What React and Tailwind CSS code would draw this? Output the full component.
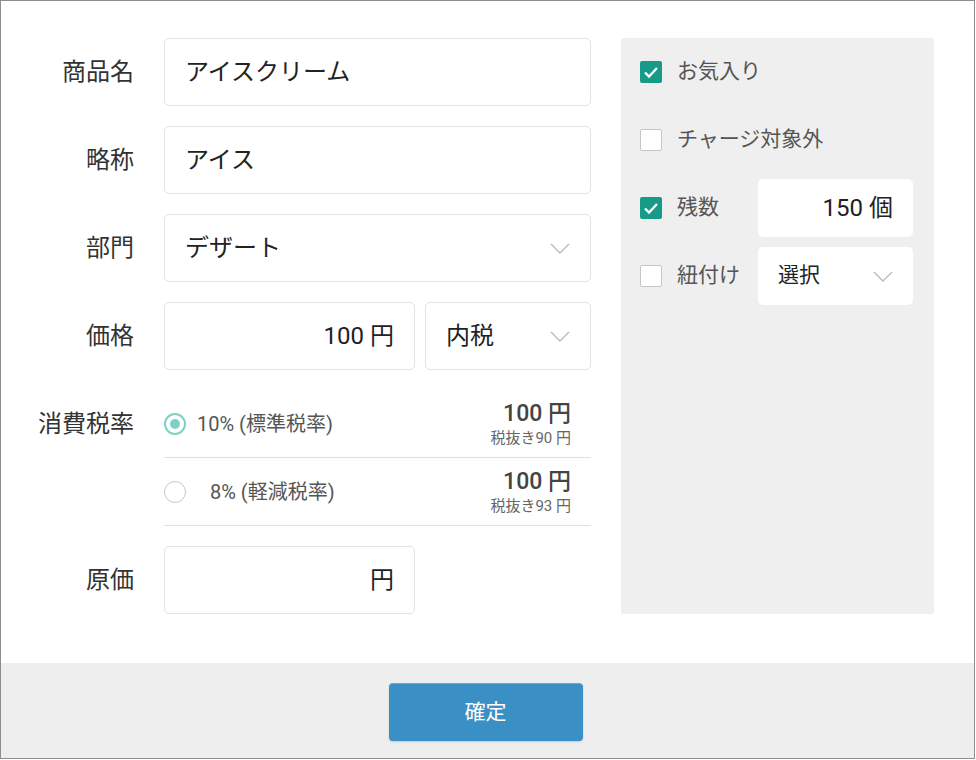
import React from 'react';

const font = { fontFamily: '"Roboto", "Noto Sans CJK JP", sans-serif' };

const Chevron = ({ className = '' }) => (
  <svg width="20" height="11" viewBox="0 0 20 11" fill="none" className={className}>
    <path d="M1 1l9 9 9-9" stroke="#bcbcbc" strokeWidth="1.4" />
  </svg>
);

const Checkbox = ({ checked }) =>
  checked ? (
    <span className="flex h-[22px] w-[22px] shrink-0 items-center justify-center rounded-[2px] bg-[#179a88]">
      <svg width="16" height="13" viewBox="0 0 16 13" fill="none">
        <path d="M2 6.5l4 4L14 2" stroke="#fff" strokeWidth="2.4" />
      </svg>
    </span>
  ) : (
    <span className="h-[22px] w-[22px] shrink-0 rounded-[2px] border border-[#c4c4c4] bg-white" />
  );

const Row = ({ label, children }) => (
  <div className="flex items-center">
    <div className="w-[133px] shrink-0 text-right text-[24px] text-[#333]">{label}</div>
    <div className="ml-[30px] flex gap-[10px]">{children}</div>
  </div>
);

const Box = ({ className = '', children }) => (
  <div className={`flex h-[68px] items-center rounded-[5px] border border-[#e2e2e2] bg-white px-[20px] text-[24px] text-[#222] ${className}`}>
    {children}
  </div>
);

const TaxRow = ({ checked, label, price, sub }) => (
  <div className="flex h-[68px] items-center border-b border-[#e0e0e0] pr-[20px]">
    {checked ? (
      <span className="flex h-[22px] w-[22px] items-center justify-center rounded-full border-2 border-[#7fd0c6]">
        <span className="h-[10px] w-[10px] rounded-full bg-[#7fd0c6]" />
      </span>
    ) : (
      <span className="h-[22px] w-[22px] rounded-full border border-[#c8c8c8]" />
    )}
    <span className={`text-[20px] text-[#555] ${checked ? 'ml-[11px]' : 'ml-[24px]'}`}>{label}</span>
    <div className="ml-auto flex flex-col items-end leading-none">
      <span className="text-[23px] font-medium text-[#444]">{price}</span>
      <span className="mt-[6px] text-[15px] text-[#666]">{sub}</span>
    </div>
  </div>
);

export default function App() {
  return (
    <div style={font} className="flex h-[759px] w-[975px] flex-col border border-[#8e8e8e] bg-white">
      <div className="flex flex-1 pt-[37px]">
        <div className="flex flex-col gap-[20px]">
          <Row label="商品名">
            <Box className="w-[427px]">アイスクリーム</Box>
          </Row>
          <Row label="略称">
            <Box className="w-[427px]">アイス</Box>
          </Row>
          <Row label="部門">
            <Box className="w-[427px] justify-between">
              デザート
              <Chevron />
            </Box>
          </Row>
          <Row label="価格">
            <Box className="w-[251px] justify-end">100 円</Box>
            <Box className="w-[166px] justify-between text-[21px]">
              内税
              <Chevron />
            </Box>
          </Row>
          <div className="flex">
            <div className="flex h-[68px] w-[133px] shrink-0 items-center justify-end text-[24px] text-[#333]">消費税率</div>
            <div className="ml-[30px] w-[427px]">
              <TaxRow checked label="10% (標準税率)" price="100 円" sub="税抜き90 円" />
              <TaxRow label="8% (軽減税率)" price="100 円" sub="税抜き93 円" />
            </div>
          </div>
          <Row label="原価">
            <Box className="w-[251px] justify-end">円</Box>
          </Row>
        </div>

        <div className="ml-[30px] flex h-[576px] w-[313px] flex-col gap-[10px] rounded-[3px] bg-[#efefef] pl-[19px] pr-[21px] pt-[5px]">
          <div className="flex h-[58px] items-center gap-[15px] text-[21px] text-[#555]">
            <Checkbox checked />
            お気入り
          </div>
          <div className="flex h-[58px] items-center gap-[15px] text-[21px] text-[#555]">
            <Checkbox />
            チャージ対象外
          </div>
          <div className="flex h-[58px] items-center text-[21px] text-[#555]">
            <Checkbox checked />
            <span className="ml-[15px] w-[81px]">残数</span>
            <div className="flex h-[58px] w-[155px] items-center justify-end rounded-[5px] bg-white px-[20px] text-[24px] text-[#222]">
              150 個
            </div>
          </div>
          <div className="flex h-[58px] items-center text-[21px] text-[#555]">
            <Checkbox />
            <span className="ml-[15px] w-[81px]">紐付け</span>
            <div className="flex h-[58px] w-[155px] items-center justify-between rounded-[5px] bg-white px-[20px] text-[21px] text-[#222]">
              選択
              <Chevron />
            </div>
          </div>
        </div>
      </div>

      <div className="flex h-[95px] shrink-0 justify-center bg-[#eeeeee] pt-[20px]">
        <button className="mr-[4px] h-[58px] w-[194px] rounded-[4px] border-t border-[#6aa8d0] bg-[#3a8fc4] text-[21px] text-white shadow-[0_1px_2px_rgba(0,0,0,0.15)]">
          確定
        </button>
      </div>
    </div>
  );
}
